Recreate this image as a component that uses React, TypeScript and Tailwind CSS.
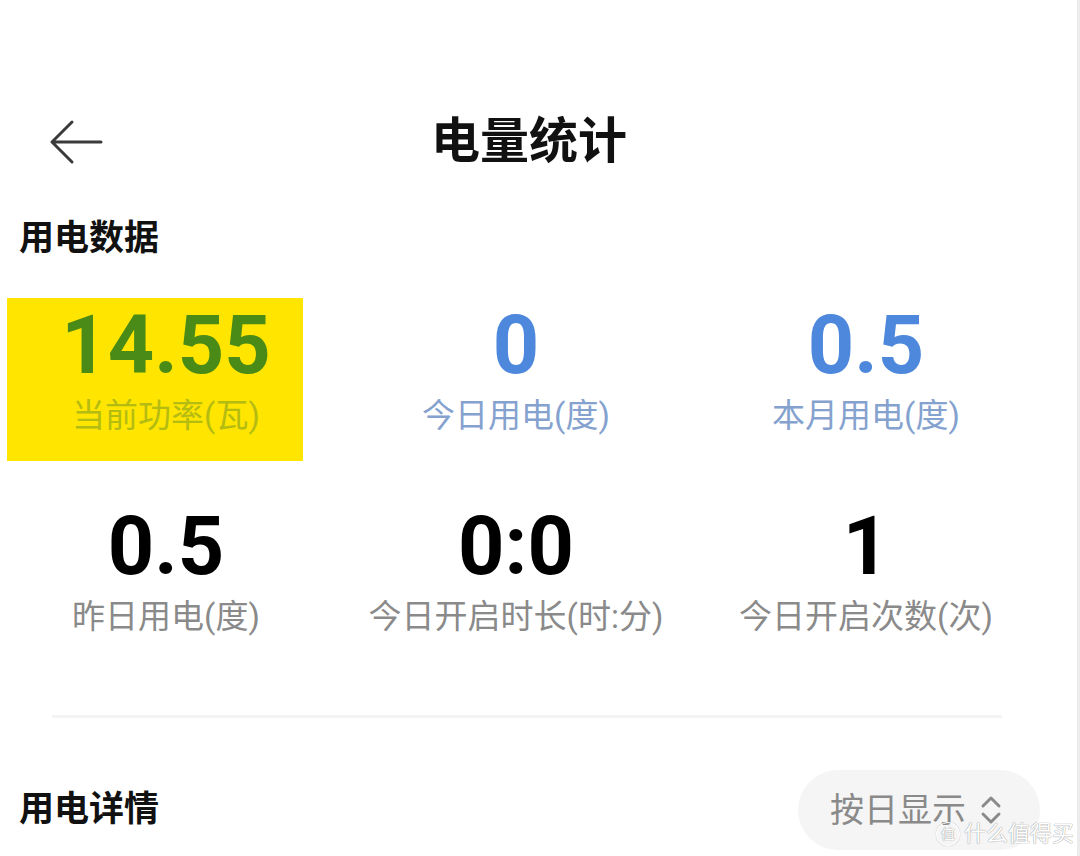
import React from "react";

type Stat = {
  value: string;
  label: string;
  valueClass: string;
  labelClass: string;
  highlight?: boolean;
};

const stats: Stat[] = [
  { value: "14.55", label: "当前功率(瓦)", valueClass: "text-[#4a8a16]", labelClass: "text-[#b4bc12]", highlight: true },
  { value: "0", label: "今日用电(度)", valueClass: "text-[#4d88dc]", labelClass: "text-[#85a2cf]" },
  { value: "0.5", label: "本月用电(度)", valueClass: "text-[#4d88dc]", labelClass: "text-[#85a2cf]" },
  { value: "0.5", label: "昨日用电(度)", valueClass: "text-black", labelClass: "text-[#8a8a8a]" },
  { value: "0:0", label: "今日开启时长(时:分)", valueClass: "text-black", labelClass: "text-[#8a8a8a]" },
  { value: "1", label: "今日开启次数(次)", valueClass: "text-black", labelClass: "text-[#8a8a8a]" },
];

const font = "font-['Roboto','Noto_Sans_CJK_SC',sans-serif]";

const StatCell = ({ stat }: { stat: Stat }) => (
  <div className="relative flex h-[201px] flex-col items-center">
    {stat.highlight && <div className="absolute left-[7px] top-[2px] h-[163px] w-[296px] bg-[#ffe500]" />}
    <div className={`relative text-[81px] font-bold leading-[100px] ${stat.valueClass}`}>{stat.value}</div>
    <div className={`relative mt-[-2px] text-[33px] leading-[44px] ${stat.labelClass}`}>{stat.label}</div>
  </div>
);

const App = () => {
  return (
    <div className={`relative h-[856px] w-[1080px] overflow-hidden bg-white ${font}`}>
      <div className="absolute right-0 top-0 h-full w-[3px] bg-[#ececec]" />

      {/* header */}
      <div className="relative mt-[87px] flex h-[110px] items-center">
        <svg className="ml-[48px]" width="56" height="48" viewBox="0 0 56 48" fill="none">
          <path d="M4 24H53M4 24L24 4M4 24L24 44" stroke="#3a3a3a" strokeWidth="3" strokeLinecap="round" strokeLinejoin="round" />
        </svg>
        <div className="absolute left-0 right-0 top-0 flex h-full justify-center">
          <div className="translate-x-[-11px] text-[49px] font-bold leading-[110px] text-[#111]">电量统计</div>
        </div>
      </div>

      <div className="ml-[19px] mt-[22px] text-[35px] font-bold leading-[40px] text-[#111]">用电数据</div>

      <div className="mt-[37px] grid w-[1032px] grid-cols-[332px_368px_332px]">
        {stats.map((s, i) => (
          <StatCell key={i} stat={s} />
        ))}
      </div>

      <div className="ml-[52px] mt-[17px] h-[3px] w-[950px] bg-[#f4f4f4]" />

      <div className="mt-[52px] flex items-center justify-between pl-[19px] pr-[40px]">
        <div className="text-[35px] font-bold leading-[40px] text-[#111]">用电详情</div>
        <div className="flex h-[80px] w-[242px] items-center rounded-full bg-[#f5f5f5] pl-[32px]">
          <span className="text-[34px] leading-[40px] text-[#8a8a8a]">按日显示</span>
          <svg className="ml-[12px]" width="26" height="34" viewBox="0 0 26 34" fill="none">
            <path d="M5 13L13 5L21 13M5 21L13 29L21 21" stroke="#8a8a8a" strokeWidth="3" strokeLinecap="round" strokeLinejoin="round" />
          </svg>
        </div>
      </div>

      {/* watermark */}
      <div className="absolute bottom-[10px] right-[6px] flex items-center gap-[4px] text-white [text-shadow:0_0_1px_#9a9a9a,0_0_1px_#9a9a9a]">
        <span className="flex h-[24px] w-[24px] items-center justify-center rounded-full border-[1.5px] border-white text-[14px] leading-none shadow-[0_0_1px_#9a9a9a]">值</span>
        <span className="text-[22px] leading-[24px]">什么值得买</span>
      </div>
    </div>
  );
};

export default App;
